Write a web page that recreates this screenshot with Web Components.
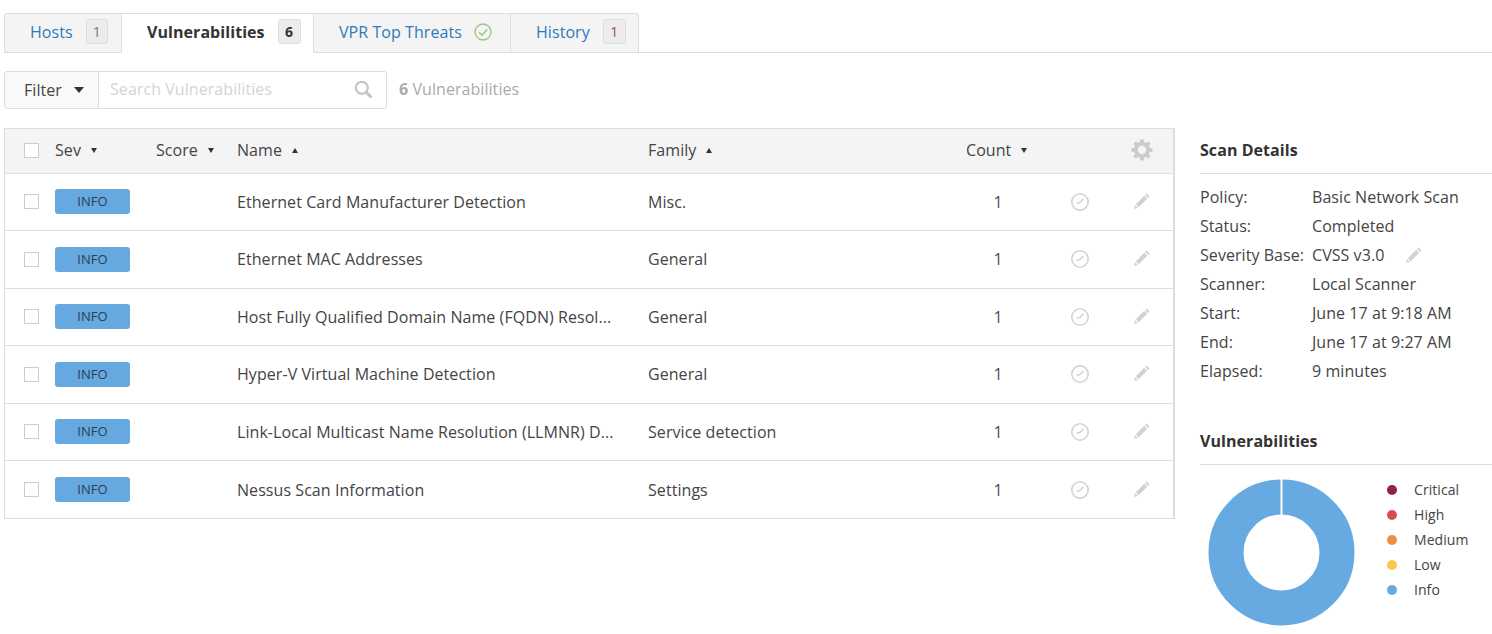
<!DOCTYPE html>
<html lang="en">
<head>
<meta charset="utf-8">
<title>Vulnerabilities</title>
<style>
  html, body { margin: 0; background: #fff; overflow: hidden; }
  body { font-family: "Open Sans", sans-serif; color: #444; letter-spacing: .06px; }
</style>
</head>
<body>
<scan-page>
  <tab-bar slot="tabs">
    <tab-item label="Hosts" badge="1" width="118"></tab-item>
    <tab-item label="Vulnerabilities" badge="6" width="192" active></tab-item>
    <tab-item label="VPR Top Threats" width="197" check></tab-item>
    <tab-item label="History" badge="1" width="128" alert></tab-item>
  </tab-bar>
  <filter-bar slot="filter" placeholder="Search Vulnerabilities" count="6" noun="Vulnerabilities"></filter-bar>
  <vuln-table slot="table">
    <vuln-row name="Ethernet Card Manufacturer Detection" family="Misc." count="1"></vuln-row>
    <vuln-row name="Ethernet MAC Addresses" family="General" count="1"></vuln-row>
    <vuln-row name="Host Fully Qualified Domain Name (FQDN) Resol..." family="General" count="1"></vuln-row>
    <vuln-row name="Hyper-V Virtual Machine Detection" family="General" count="1"></vuln-row>
    <vuln-row name="Link-Local Multicast Name Resolution (LLMNR) D..." family="Service detection" count="1"></vuln-row>
    <vuln-row name="Nessus Scan Information" family="Settings" count="1"></vuln-row>
  </vuln-table>
  <scan-details slot="side"></scan-details>
  <vuln-donut slot="side"></vuln-donut>
</scan-page>

<script>
const PENCIL = `<svg width="18" height="18" viewBox="0 0 18 18"><path d="M13.6 1.4l3 3-1.5 1.5-3-3zM11.2 3.8l3 3-8.4 8.4-3-3zM2.1 13l2.9 2.9-3.9 1z" fill="currentColor"/></svg>`;

class ScanPage extends HTMLElement {
  constructor() {
    super();
    this.attachShadow({ mode: 'open' });
    this.shadowRoot.innerHTML = `
      <style>
        :host { display: block; height: 634px; padding: 13px 0 0 4px; box-sizing: border-box; }
        .body { display: flex; gap: 25px; margin-top: 19px; }
        .main { width: 1171px; flex: none; }
        .side { flex: 1; min-width: 0; }
      </style>
      <slot name="tabs"></slot>
      <slot name="filter"></slot>
      <div class="body">
        <div class="main"><slot name="table"></slot></div>
        <div class="side"><slot name="side"></slot></div>
      </div>`;
  }
}
customElements.define('scan-page', ScanPage);

class TabBar extends HTMLElement {
  constructor() {
    super();
    this.attachShadow({ mode: 'open' });
    this.shadowRoot.innerHTML = `
      <style>
        :host { display: flex; height: 40px; box-sizing: border-box; border-bottom: 1px solid #ddd; }
      </style>
      <slot></slot>`;
  }
}
customElements.define('tab-bar', TabBar);

class TabItem extends HTMLElement {
  constructor() {
    super();
    this.attachShadow({ mode: 'open' });
  }
  connectedCallback() {
    const badge = this.getAttribute('badge');
    const check = this.hasAttribute('check');
    this.style.width = this.getAttribute('width') + 'px';
    this.shadowRoot.innerHTML = `
      <style>
        :host {
          display: flex; align-items: center; gap: 12px; height: 40px; box-sizing: border-box; flex: none;
          padding: 0 0 3px 25px; background: #f4f4f4; color: #2f7ab9;
          border: 1px solid #ddd; border-left-width: 0; font-size: 16px;
        }
        :host(:first-child) { border-left-width: 1px; border-top-left-radius: 3px; }
        :host(:last-child) { border-top-right-radius: 3px; }
        :host([active]) {
          background: #fff; color: #333; font-weight: 700; border-bottom-color: #fff;
        }
        .badge {
          min-width: 22px; height: 25px; line-height: 24px; margin-left: 1px; text-align: center; box-sizing: border-box;
          background: #ececec; border: 1px solid #ddd; border-radius: 3px; font-size: 14px;
          color: #777; font-weight: 400;
        }
        :host([active]) .badge { color: #333; font-weight: 700; min-width: 23px; }
        :host([alert]) .badge { color: #a6494a; min-width: 23px; }
        svg { display: block; }
      </style>
      <span>${this.getAttribute('label')}</span>
      ${badge ? `<span class="badge">${badge}</span>` : ''}
      ${check ? `<svg width="18" height="18" viewBox="0 0 18 18" fill="none" stroke="#94c47d" stroke-width="1.3"><circle cx="9" cy="9" r="8"/><path d="M5 9.2l3 3 5.2-6"/></svg>` : ''}`;
  }
}
customElements.define('tab-item', TabItem);

class FilterBar extends HTMLElement {
  constructor() {
    super();
    this.attachShadow({ mode: 'open' });
  }
  connectedCallback() {
    this.shadowRoot.innerHTML = `
      <style>
        :host { display: flex; align-items: center; margin-top: 18px; height: 38px; font-size: 16px; }
        .box { display: flex; width: 383px; height: 38px; box-sizing: border-box; border: 1px solid #ddd; border-radius: 3px; }
        .btn {
          display: flex; align-items: center; gap: 12px; width: 94px; box-sizing: border-box; padding: 0 0 1px 19px;
          background: #f9f9f9; border-right: 1px solid #ddd; color: #444;
        }
        .caret { width: 0; height: 0; border: 5.5px solid transparent; border-top: 6px solid #333; border-bottom: 0; }
        .search { flex: 1; display: flex; align-items: center; justify-content: space-between; padding: 0 13px 2px 11px; color: #d4d4d4; }
        .count { margin: 0 0 2px 12px; color: #aaa; }
        b { font-weight: 700; }
        svg { display: block; }
      </style>
      <div class="box">
        <div class="btn">Filter <span class="caret"></span></div>
        <div class="search">
          <span>${this.getAttribute('placeholder')}</span>
          <svg width="19" height="19" viewBox="0 0 19 19" fill="none" stroke="#c4c4c4"><circle cx="7.8" cy="7.8" r="6" stroke-width="2.2"/><path d="M12.3 12.3l5.2 5.2" stroke-width="3"/></svg>
        </div>
      </div>
      <span class="count"><b>${this.getAttribute('count')}</b> ${this.getAttribute('noun')}</span>`;
  }
}
customElements.define('filter-bar', FilterBar);

const COLUMNS = 'grid-template-columns: 50px 101px 81px 411px 318px 64px 100px 24px 1fr;';

class VulnTable extends HTMLElement {
  constructor() {
    super();
    this.attachShadow({ mode: 'open' });
    const teeth = [0, 45, 90, 135].map(a => `<rect x="8.2" y="0.5" width="3.6" height="19" transform="rotate(${a} 10 10)"/>`).join('');
    const head = (label, dir) => `<div class="th">${label}<span class="arrow ${dir}"></span></div>`;
    this.shadowRoot.innerHTML = `
      <style>
        :host {
          display: block; width: 1171px; box-sizing: border-box; font-size: 16px;
          border: 1px solid #ddd; border-right-width: 2px;
        }
        .head {
          display: grid; ${COLUMNS} align-items: center; height: 44.5px; box-sizing: border-box; padding-bottom: 1px;
          background: #f4f4f4; border-bottom: 1px solid #ddd; color: #444;
        }
        .th { display: flex; align-items: center; }
        .arrow { width: 0; height: 0; margin-left: 10px; border: 3px solid transparent; }
        .arrow.down { border-top: 5px solid #333; border-bottom: 0; }
        .arrow.up { border-bottom: 5px solid #333; border-top: 0; }
        .box { width: 15px; height: 15px; margin-left: 19px; box-sizing: border-box; background: #fff; border: 1px solid #ccc; }
        .gear { grid-column: 8; justify-self: center; }
        svg { display: block; }
      </style>
      <div class="head">
        <div><div class="box"></div></div>
        ${head('Sev', 'down')}
        ${head('Score', 'down')}
        ${head('Name', 'up')}
        ${head('Family', 'up')}
        ${head('Count', 'down')}
        <svg class="gear" width="22" height="22" viewBox="0 0 20 20" fill="#ccc">
          ${teeth}
          <circle cx="10" cy="10" r="5.6" fill="#f4f4f4" stroke="#ccc" stroke-width="3.6"/>
        </svg>
      </div>
      <slot></slot>`;
  }
}
customElements.define('vuln-table', VulnTable);

class VulnRow extends HTMLElement {
  constructor() {
    super();
    this.attachShadow({ mode: 'open' });
  }
  connectedCallback() {
    this.shadowRoot.innerHTML = `
      <style>
        :host {
          display: grid; ${COLUMNS} align-items: center; height: 57.5px; box-sizing: border-box;
          border-bottom: 1px solid #ddd; font-size: 16px; color: #444;
        }
        :host(:last-child) { border-bottom: 0; height: 57px; }
        .box { width: 15px; height: 15px; margin-left: 19px; box-sizing: border-box; background: #fff; border: 1px solid #ccc; }
        .sev {
          width: 75px; height: 25px; line-height: 25px; text-align: center; background: #65a9e0;
          border-radius: 3px; font-size: 13px; color: #2d3e50;
        }
        .name { white-space: nowrap; }
        .count { text-align: center; color: #5b3f68; }
        .ack, .edit { justify-self: center; color: #d2d2d2; }
        .edit { margin-bottom: 2px; }
        svg { display: block; }
      </style>
      <div><div class="box"></div></div>
      <div class="sev">INFO</div>
      <div></div>
      <div class="name">${this.getAttribute('name')}</div>
      <div>${this.getAttribute('family')}</div>
      <div class="count">${this.getAttribute('count')}</div>
      <svg class="ack" width="20" height="20" viewBox="0 0 20 20" fill="none" stroke="currentColor"><circle cx="10" cy="10" r="8.2" stroke-width="1.6"/><path d="M10 10.6l3.6-3.8M10 10.6l-3.4.6" stroke-width="1.5"/></svg>
      <div class="edit">${PENCIL}</div>`;
  }
}
customElements.define('vuln-row', VulnRow);

class ScanDetails extends HTMLElement {
  constructor() {
    super();
    this.attachShadow({ mode: 'open' });
    const rows = [
      ['Policy:', 'Basic Network Scan'],
      ['Status:', 'Completed'],
      ['Severity Base:', `CVSS v3.0<span class="pen">${PENCIL}</span>`],
      ['Scanner:', 'Local Scanner'],
      ['Start:', 'June 17 at 9:18 AM'],
      ['End:', 'June 17 at 9:27 AM'],
      ['Elapsed:', '9 minutes']
    ];
    this.shadowRoot.innerHTML = `
      <style>
        :host { display: block; font-size: 16px; color: #444; }
        h3 {
          margin: 0; height: 46px; line-height: 45px; box-sizing: border-box; border-bottom: 1px solid #ddd;
          font-size: 16px; font-weight: 700; color: #333;
        }
        dl { display: grid; grid-template-columns: 112px 1fr; grid-auto-rows: 29px; align-items: center; margin: 8px 0 0; }
        dt, dd { margin: 0; white-space: nowrap; }
        dd { display: flex; align-items: center; }
        .pen { color: #d2d2d2; margin-left: 21px; }
        svg { display: block; }
      </style>
      <h3>Scan Details</h3>
      <dl>${rows.map(r => `<dt>${r[0]}</dt><dd>${r[1]}</dd>`).join('')}</dl>`;
  }
}
customElements.define('scan-details', ScanDetails);

class VulnDonut extends HTMLElement {
  constructor() {
    super();
    this.attachShadow({ mode: 'open' });
    const legend = [
      ['Critical', '#91243e'],
      ['High', '#dd4b50'],
      ['Medium', '#f18c43'],
      ['Low', '#f8c851'],
      ['Info', '#67acE1']
    ];
    this.shadowRoot.innerHTML = `
      <style>
        :host { display: block; margin-top: 34px; font-size: 14px; color: #444; }
        h3 {
          margin: 0; height: 46px; line-height: 45px; box-sizing: border-box; border-bottom: 1px solid #ddd;
          font-size: 16px; font-weight: 700; color: #333;
        }
        .wrap { display: flex; margin-top: 14px; }
        svg { display: block; margin-left: 8px; flex: none; }
        ul { list-style: none; margin: -2px 0 0 32px; padding: 0; }
        li { display: flex; align-items: center; height: 25px; }
        i { width: 10px; height: 10px; border-radius: 50%; margin-right: 17px; }
      </style>
      <h3>Vulnerabilities</h3>
      <div class="wrap">
        <svg width="147" height="147" viewBox="0 0 147 147">
          <circle cx="73.5" cy="73.5" r="55.5" fill="none" stroke="#66aae1" stroke-width="35"/>
          <rect x="72.5" y="0" width="2" height="36" fill="#fff"/>
        </svg>
        <ul>${legend.map(l => `<li><i style="background:${l[1]}"></i>${l[0]}</li>`).join('')}</ul>
      </div>`;
  }
}
customElements.define('vuln-donut', VulnDonut);
</script>
</body>
</html>
